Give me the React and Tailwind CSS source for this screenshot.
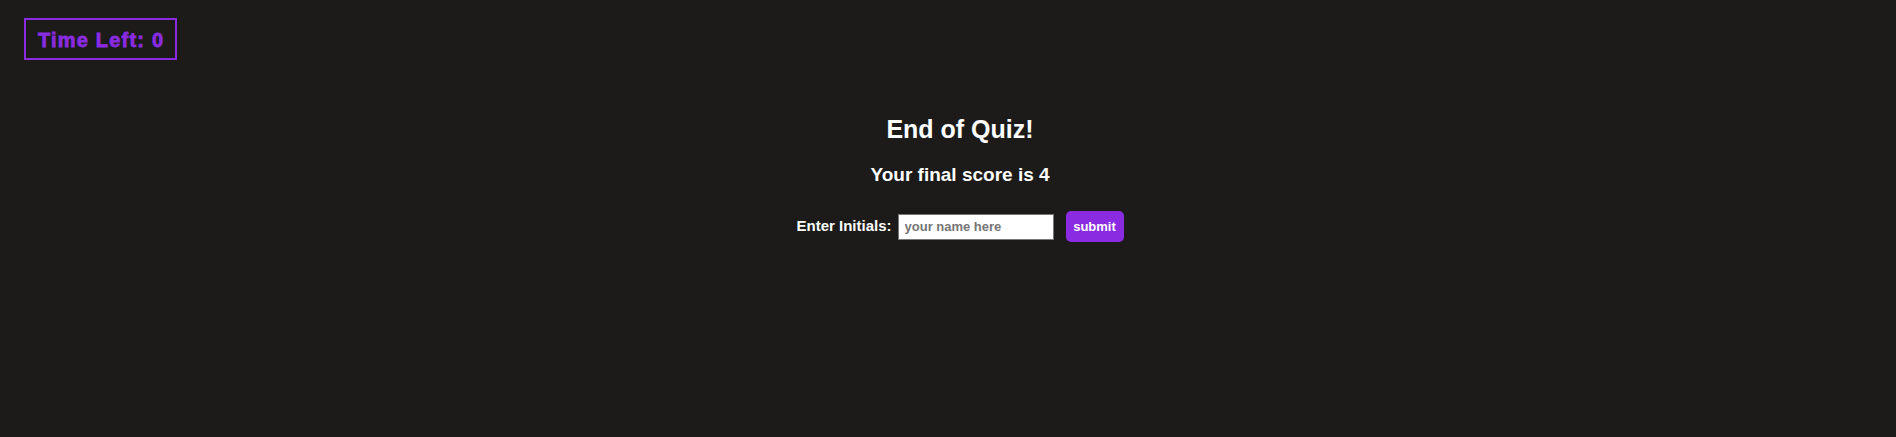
export default function App() {
  return (
    <div className="min-h-[437px] bg-[#1c1b1a] font-['Liberation_Sans',Arial,sans-serif] text-white">
      <div className="pt-[18px] pl-[24px]">
        <div className="flex h-[42px] w-[153px] items-center border-2 border-[#8a2be2] pl-[12px] pt-[2px]">
          <span className="text-[20px] font-bold leading-none tracking-[1.2px] text-[#8a2be2] [-webkit-text-stroke:0.8px_#8a2be2]">
            Time Left: 0
          </span>
        </div>
      </div>

      <div className="flex flex-col items-center pl-[24px] pt-[55px]">
        <h2 className="text-[25px] font-bold leading-[28px]">End of Quiz!</h2>
        <h3 className="mt-[21px] text-[19px] font-bold leading-[22px]">Your final score is 4</h3>
        <div className="mt-[25px] flex items-center">
          <label className="text-[15px] font-bold">Enter Initials:</label>
          <input
            type="text"
            placeholder="your name here"
            className="ml-[6px] h-[26px] w-[156px] border border-[#767676] bg-white px-[6px] text-[13px] text-black placeholder:text-[#757575] placeholder:font-bold"
          />
          <button className="ml-[12px] h-[31px] w-[58px] rounded-[5px] bg-[#8a2be2] text-[13px] font-bold text-white">
            submit
          </button>
        </div>
      </div>
    </div>
  );
}
